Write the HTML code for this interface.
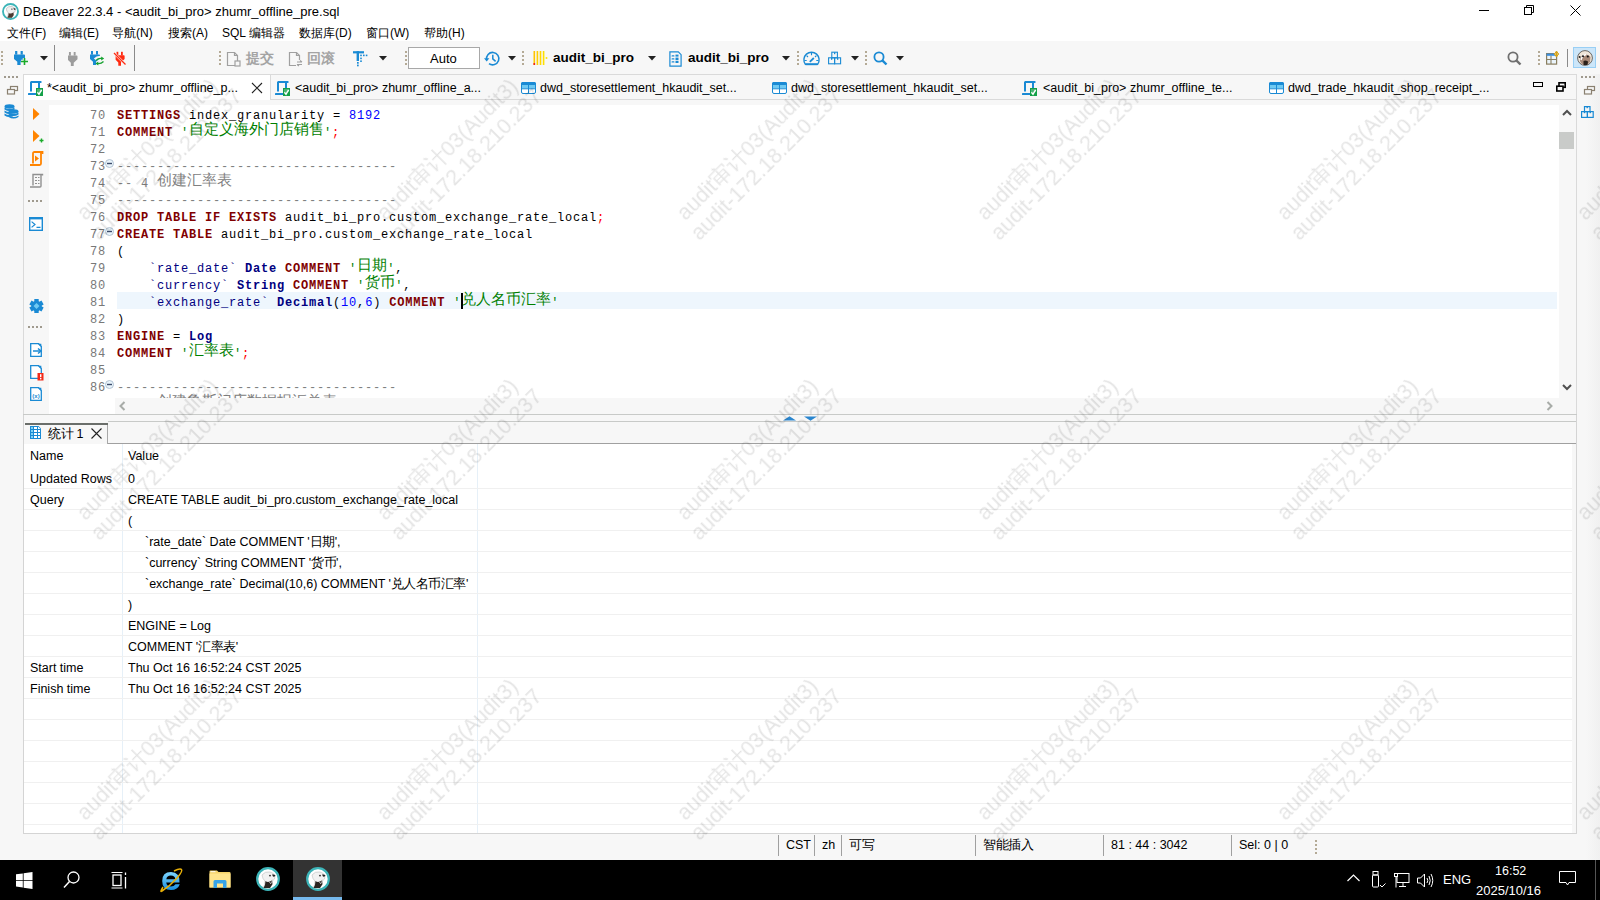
<!DOCTYPE html>
<html><head><meta charset="utf-8">
<style>
*{margin:0;padding:0;box-sizing:border-box}
html,body{width:1600px;height:900px;overflow:hidden;background:#f7f7f7;font-family:"Liberation Sans",sans-serif;font-size:12px;color:#000}
.a{position:absolute}
.t{position:absolute;white-space:pre;line-height:1}
svg{position:absolute;overflow:visible}
.code{position:absolute;font-family:"Liberation Mono",monospace;font-size:12px;letter-spacing:0.8px;white-space:pre;line-height:17px}
.ln{position:absolute;font-family:"Liberation Mono",monospace;font-size:12px;letter-spacing:0.8px;white-space:pre;line-height:17px;color:#787878;text-align:right;width:40px}
.k{color:#800000;font-weight:bold}
.ty{color:#000080;font-weight:bold}
.s{color:#008000}
.n{color:#0000ff}
.c{color:#808080}
.p{color:#ff0000}
.bq{color:#000080}
.cj{display:inline-block;width:15px;text-align:center;font-size:15px;line-height:17px;vertical-align:top;position:relative;top:-3px}
.rt{position:absolute;font-size:12.5px;white-space:pre;line-height:1}
.wm{position:absolute;width:240px;text-align:center;transform-origin:0 0;transform:rotate(-45deg);white-space:pre;color:rgba(0,0,0,0.105);will-change:transform;font-size:21.5px;line-height:24px;pointer-events:none}
.u{display:inline-block;width:1em;text-align:center}

</style></head><body>
<div class="a" style="left:0px;top:0px;width:1600px;height:41px;background:#fff"></div>
<svg style="left:2px;top:3px" width="17" height="17" viewBox="0 0 17 17"><g transform="scale(0.7083)"><circle cx="12" cy="12" r="10.6" fill="#fff" stroke="#3cb4b8" stroke-width="2.6"/><path d="M6 8Q9 4 14 5Q18 6 19 9L18.5 12Q17 14 16 13L16.5 17Q15 20 13 21L7.5 21Q9 17 9 14Q6.5 12 6 8Z" fill="#f0f0f0" stroke="#aaa" stroke-width=".8"/><path d="M9.5 14Q12 16 16 13.5L16.5 17L14 21H7.5Q9.5 18 9.5 14Z" fill="#4a3a30"/><path d="M16 7.5Q18.5 7 19.5 8.5Q19 10 17 9.5Z" fill="#222"/><circle cx="14" cy="8.6" r="1" fill="#222"/></g></svg>
<div class="t" style="left:23px;top:5px;font-size:13px">DBeaver 22.3.4 - &lt;audit_bi_pro&gt; zhumr_offline_pre.sql</div>
<div class="t" style="left:7px;top:27px;font-size:12px"><span class="u">文</span><span class="u">件</span>(F)</div>
<div class="t" style="left:59px;top:27px;font-size:12px"><span class="u">编</span><span class="u">辑</span>(E)</div>
<div class="t" style="left:112px;top:27px;font-size:12px"><span class="u">导</span><span class="u">航</span>(N)</div>
<div class="t" style="left:168px;top:27px;font-size:12px"><span class="u">搜</span><span class="u">索</span>(A)</div>
<div class="t" style="left:222px;top:27px;font-size:12px">SQL <span class="u">编</span><span class="u">辑</span><span class="u">器</span></div>
<div class="t" style="left:299px;top:27px;font-size:12px"><span class="u">数</span><span class="u">据</span><span class="u">库</span>(D)</div>
<div class="t" style="left:366px;top:27px;font-size:12px"><span class="u">窗</span><span class="u">口</span>(W)</div>
<div class="t" style="left:424px;top:27px;font-size:12px"><span class="u">帮</span><span class="u">助</span>(H)</div>
<div class="a" style="left:1479px;top:10px;width:10px;height:1px;background:#000"></div>
<svg style="left:1524px;top:5px" width="11" height="11" viewBox="0 0 11 11"><rect x="0.5" y="2.5" width="7" height="7" fill="none" stroke="#000"/><path d="M2.5 2.5V0.5H9.5V7.5H7.5" fill="none" stroke="#000"/></svg>
<svg style="left:1570px;top:5px" width="11" height="11" viewBox="0 0 11 11"><path d="M0.5 0.5L10.5 10.5M10.5 0.5L0.5 10.5" stroke="#000" stroke-width="1"/></svg>
<div class="a" style="left:0px;top:41px;width:1600px;height:33px;background:#f7f7f7"></div>
<div class="a" style="left:1px;top:51px;width:2px;height:2px;background:#b4aa96"></div><div class="a" style="left:1px;top:55px;width:2px;height:2px;background:#b4aa96"></div><div class="a" style="left:1px;top:59px;width:2px;height:2px;background:#b4aa96"></div><div class="a" style="left:1px;top:63px;width:2px;height:2px;background:#b4aa96"></div>
<svg style="left:14px;top:51px" width="16" height="15" viewBox="0 0 16 15"><g transform="scale(1.100,1)"><rect x="1" y="0" width="2" height="3.6" fill="#1a8ad4"/><rect x="6" y="0" width="2" height="3.6" fill="#1a8ad4"/><path d="M0 3.4H9.2Q10 3.4 10 4.2V7.2L6 10.8V14H3V10.8L0 8Z" fill="#1a8ad4"/></g><path d="M7 10.5H14M10.5 7V14" stroke="#f7f7f7" stroke-width="3.5"/><path d="M7 10.5H14M10.5 7V14" stroke="#1aab2a" stroke-width="1.6"/></svg>
<svg style="left:40px;top:56px" width="8" height="5" viewBox="0 0 8 5"><path d="M0 0H8L4 4.5Z" fill="#222"/></svg>
<div class="a" style="left:54px;top:45px;width:1px;height:26px;background:#8a8a8a"></div>
<svg style="left:68px;top:52px" width="10" height="13" viewBox="0 0 10 13"><g transform="scale(0.950,1)"><rect x="1" y="0" width="2" height="3.6" fill="#9c9c9c"/><rect x="6" y="0" width="2" height="3.6" fill="#9c9c9c"/><path d="M0 3.4H9.2Q10 3.4 10 4.2V7.2L6 10.8V14H3V10.8L0 8Z" fill="#9c9c9c"/></g></svg>
<svg style="left:90px;top:51px" width="16" height="15" viewBox="0 0 16 15"><g transform="scale(1.000,1)"><rect x="1" y="0" width="2" height="3.6" fill="#1a8ad4"/><rect x="6" y="0" width="2" height="3.6" fill="#1a8ad4"/><path d="M0 3.4H9.2Q10 3.4 10 4.2V7.2L6 10.8V14H3V10.8L0 8Z" fill="#1a8ad4"/></g><path d="M5 8.5Q7.5 5.5 12 6.3M14.5 10Q12 13.3 7.5 12.5" fill="none" stroke="#f7f7f7" stroke-width="3"/><path d="M6 9.5Q8.5 6.8 12 7.5M13.5 10.5Q11 13 7.5 12.5" fill="none" stroke="#18a332" stroke-width="1.4"/><path d="M11.2 5.5L14.2 7.5L11.2 9.5Z M8.3 10.5L5.3 12.5L8.3 14.5Z" fill="#18a332"/></svg>
<svg style="left:112px;top:51px" width="15" height="15" viewBox="0 0 15 15"><g transform="translate(3.6,0.8)"><g transform="scale(0.900,1)"><rect x="1" y="0" width="2" height="3.6" fill="#ff2a10"/><rect x="6" y="0" width="2" height="3.6" fill="#ff2a10"/><path d="M0 3.4H9.2Q10 3.4 10 4.2V7.2L6 10.8V14H3V10.8L0 8Z" fill="#ff2a10"/></g></g><path d="M2 2L13.5 13.5" stroke="#f7f7f7" stroke-width="2.4"/><path d="M2 2L13.5 13.5" stroke="#ff2a10" stroke-width="1.2"/></svg>
<div class="a" style="left:134px;top:45px;width:1px;height:26px;background:#8a8a8a"></div>
<div class="a" style="left:219px;top:51px;width:2px;height:2px;background:#b4aa96"></div><div class="a" style="left:219px;top:55px;width:2px;height:2px;background:#b4aa96"></div><div class="a" style="left:219px;top:59px;width:2px;height:2px;background:#b4aa96"></div><div class="a" style="left:219px;top:63px;width:2px;height:2px;background:#b4aa96"></div>
<svg style="left:226px;top:51px" width="15" height="16" viewBox="0 0 15 16"><path d="M1.5 1.5H8.5L11.5 4.5V14.5H1.5Z" fill="none" stroke="#a0a0a0" stroke-width="1.2"/><path d="M8.5 1.5V4.5H11.5" fill="none" stroke="#a0a0a0" stroke-width="1.2"/><rect x="9" y="10" width="5" height="5" fill="#f7f7f7" stroke="#a0a0a0" stroke-width="1.2"/></svg>
<div class="t" style="left:246px;top:51px;font-size:14px;font-weight:bold;color:#a4a4a4"><span class="u">提</span><span class="u">交</span></div>
<svg style="left:288px;top:51px" width="15" height="16" viewBox="0 0 15 16"><path d="M1.5 1.5H8.5L11.5 4.5V14.5H1.5Z" fill="none" stroke="#a0a0a0" stroke-width="1.2"/><path d="M8.5 1.5V4.5H11.5" fill="none" stroke="#a0a0a0" stroke-width="1.2"/><rect x="8" y="9" width="7" height="7" fill="#f7f7f7"/><path d="M9 11H14M12 9.5L14 11M9 13.5H14M11 15L9 13.5" stroke="#a0a0a0" stroke-width="1.1" fill="none"/></svg>
<div class="t" style="left:307px;top:51px;font-size:14px;font-weight:bold;color:#a4a4a4"><span class="u">回</span><span class="u">滚</span></div>
<svg style="left:353px;top:51px" width="16" height="16" viewBox="0 0 16 16"><rect x="0" y="0.2" width="11" height="2.2" fill="#1a8ad4"/><rect x="3.6" y="0.2" width="2.4" height="9.8" fill="#1a8ad4"/><rect x="4" y="11" width="1.7" height="1.7" fill="#1a8ad4"/><rect x="4" y="13.6" width="1.7" height="1.7" fill="#1a8ad4"/><rect x="7.2" y="3.6" width="1.6" height="1.6" fill="#1a8ad4"/><rect x="10" y="3.6" width="1.6" height="1.6" fill="#1a8ad4"/><rect x="12.8" y="3.6" width="1.6" height="1.6" fill="#1a8ad4"/><rect x="7.2" y="6.6" width="1.6" height="1.6" fill="#1a8ad4"/><rect x="7.2" y="9.4" width="1.6" height="1.6" fill="#1a8ad4"/></svg>
<svg style="left:379px;top:56px" width="8" height="5" viewBox="0 0 8 5"><path d="M0 0H8L4 4.5Z" fill="#222"/></svg>
<div class="a" style="left:405px;top:51px;width:2px;height:2px;background:#b4aa96"></div><div class="a" style="left:405px;top:55px;width:2px;height:2px;background:#b4aa96"></div><div class="a" style="left:405px;top:59px;width:2px;height:2px;background:#b4aa96"></div><div class="a" style="left:405px;top:63px;width:2px;height:2px;background:#b4aa96"></div>
<div class="a" style="left:408px;top:47px;width:72px;height:22px;background:#fff;border:1px solid #a8a8a8"></div>
<div class="t" style="left:430px;top:52px;font-size:13px">Auto</div>
<svg style="left:484px;top:51px" width="17" height="15" viewBox="0 0 17 15"><path d="M2.6 8.8A6.2 6.2 0 1 1 5 12.6" fill="none" stroke="#1a8ad4" stroke-width="1.6"/><path d="M0 7.2H5.4L2.7 10.6Z" fill="#1a8ad4"/><path d="M8.8 3.8V7.8L11.6 10.4" fill="none" stroke="#1a8ad4" stroke-width="1.5"/></svg>
<svg style="left:508px;top:56px" width="8" height="5" viewBox="0 0 8 5"><path d="M0 0H8L4 4.5Z" fill="#222"/></svg>
<div class="a" style="left:522px;top:51px;width:2px;height:2px;background:#b4aa96"></div><div class="a" style="left:522px;top:55px;width:2px;height:2px;background:#b4aa96"></div><div class="a" style="left:522px;top:59px;width:2px;height:2px;background:#b4aa96"></div><div class="a" style="left:522px;top:63px;width:2px;height:2px;background:#b4aa96"></div>
<svg style="left:533px;top:51px" width="15" height="15" viewBox="0 0 15 15"><rect x="0.5" y="0" width="1.6" height="14" fill="#ffc400"/><rect x="3.6" y="0" width="1.6" height="14" fill="#ffcf00"/><rect x="6.7" y="0" width="1.6" height="14" fill="#ffd800"/><rect x="9.8" y="0" width="1.6" height="14" fill="#ffe000"/><rect x="0.5" y="12" width="1.6" height="2" fill="#f02020"/><circle cx="13.5" cy="7" r="1" fill="#ffe600"/></svg>
<div class="t" style="left:553px;top:51px;font-size:13.5px;font-weight:bold">audit_bi_pro</div>
<svg style="left:648px;top:56px" width="8" height="5" viewBox="0 0 8 5"><path d="M0 0H8L4 4.5Z" fill="#222"/></svg>
<svg style="left:669px;top:51px" width="13" height="16" viewBox="0 0 13 16"><path d="M0.9 0.9H9.3L12.1 3.7V15.1H0.9Z" fill="none" stroke="#1a8ad4" stroke-width="1.2"/><rect x="2.5" y="4.2" width="3" height="1.4" rx=".7" fill="#1a8ad4"/><rect x="2.5" y="7.2" width="3" height="1.4" rx=".7" fill="#1a8ad4"/><rect x="2.5" y="10.2" width="3" height="1.4" rx=".7" fill="#1a8ad4"/><rect x="6.5" y="3.6" width="3" height="2" fill="#1a8ad4"/><rect x="6.5" y="6.6" width="3" height="2.6" fill="#1a8ad4"/><rect x="6.5" y="10" width="3" height="2" fill="#1a8ad4"/></svg>
<div class="t" style="left:688px;top:51px;font-size:13.5px;font-weight:bold">audit_bi_pro</div>
<svg style="left:782px;top:56px" width="8" height="5" viewBox="0 0 8 5"><path d="M0 0H8L4 4.5Z" fill="#222"/></svg>
<div class="a" style="left:797px;top:51px;width:2px;height:2px;background:#b4aa96"></div><div class="a" style="left:797px;top:55px;width:2px;height:2px;background:#b4aa96"></div><div class="a" style="left:797px;top:59px;width:2px;height:2px;background:#b4aa96"></div><div class="a" style="left:797px;top:63px;width:2px;height:2px;background:#b4aa96"></div>
<svg style="left:803px;top:51px" width="17" height="14" viewBox="0 0 17 14"><path d="M2.3 13.2A7.6 7.6 0 1 1 14.7 13.2Z" fill="none" stroke="#1a8ad4" stroke-width="1.4"/><path d="M8.5 2V4.2M3.6 4.6L5 6M13.4 4.6L12 6M1.5 9.5H3.7M15.5 9.5H13.3" stroke="#1a8ad4" stroke-width="1.1"/><path d="M6.8 10.8L10.8 7" stroke="#1a8ad4" stroke-width="1.8"/><rect x="2.5" y="12.4" width="12" height="1.8" fill="#1a8ad4"/></svg>
<svg style="left:828px;top:51px" width="14" height="14" viewBox="0 0 14 14"><g fill="none" stroke="#1a8ad4" stroke-width="1.1"><rect x="3.8" y="1.2" width="5.6" height="5.6"/><rect x="0.6" y="6.8" width="6" height="6"/><rect x="6.6" y="6.8" width="6" height="6"/></g><g fill="#1a8ad4"><rect x="6" y="1.2" width="1.3" height="2"/><rect x="3" y="6.8" width="1.3" height="2"/><rect x="9" y="6.8" width="1.3" height="2"/></g></svg>
<svg style="left:851px;top:56px" width="8" height="5" viewBox="0 0 8 5"><path d="M0 0H8L4 4.5Z" fill="#222"/></svg>
<div class="a" style="left:865px;top:51px;width:2px;height:2px;background:#b4aa96"></div><div class="a" style="left:865px;top:55px;width:2px;height:2px;background:#b4aa96"></div><div class="a" style="left:865px;top:59px;width:2px;height:2px;background:#b4aa96"></div><div class="a" style="left:865px;top:63px;width:2px;height:2px;background:#b4aa96"></div>
<svg style="left:873px;top:51px" width="15" height="15" viewBox="0 0 15 15"><circle cx="6" cy="6" r="4.6" fill="none" stroke="#1a8ad4" stroke-width="1.8"/><path d="M9.3 9.3L13.5 13.5" stroke="#1a8ad4" stroke-width="2.4"/></svg>
<svg style="left:896px;top:56px" width="8" height="5" viewBox="0 0 8 5"><path d="M0 0H8L4 4.5Z" fill="#222"/></svg>
<svg style="left:1507px;top:51px" width="15" height="15" viewBox="0 0 15 15"><circle cx="6" cy="6" r="4.6" fill="none" stroke="#707070" stroke-width="1.8"/><path d="M9.3 9.3L13.5 13.5" stroke="#707070" stroke-width="2.4"/></svg>
<div class="a" style="left:1538px;top:51px;width:2px;height:2px;background:#b4aa96"></div><div class="a" style="left:1538px;top:55px;width:2px;height:2px;background:#b4aa96"></div><div class="a" style="left:1538px;top:59px;width:2px;height:2px;background:#b4aa96"></div><div class="a" style="left:1538px;top:63px;width:2px;height:2px;background:#b4aa96"></div>
<svg style="left:1546px;top:51px" width="15" height="14" viewBox="0 0 15 14"><rect x="0.6" y="2.6" width="10" height="10.5" fill="#eaf4fb" stroke="#8a7f60" stroke-width="1.2"/><rect x="0.6" y="2.6" width="10" height="2.2" fill="#3a8ede"/><path d="M0.6 8.5H10.6M5 4.8V13" stroke="#8a7f60" stroke-width="1.1"/><path d="M10.5 0L12.5 3L10.5 6L8.5 3Z M8 3H13M10.5 0.5V5.5" fill="#fff6cc" stroke="#d4a21a" stroke-width="1"/></svg>
<div class="a" style="left:1567px;top:49px;width:1px;height:18px;background:#8a8a8a"></div>
<div class="a" style="left:1573px;top:47px;width:23px;height:21px;background:#cce6f9;border:1px solid #99cff5"></div>
<svg style="left:1577px;top:50px" width="16" height="16" viewBox="0 0 16 16"><circle cx="8" cy="8" r="7.4" fill="#efe6da" stroke="#3a302a" stroke-width=".7"/><path d="M3 9Q4 5 8 4.5Q12 4.5 13.5 7L13 12Q11 15 8 15Q4 14.5 3 11Z" fill="#a88a78"/><path d="M4 10Q5 5.5 9 4.5" fill="none" stroke="#fff" stroke-width="1.3"/><circle cx="6" cy="6.3" r="1" fill="#111"/><circle cx="10.8" cy="6.5" r="1.1" fill="#111"/><path d="M6.5 11Q8.5 10 11 11.5L10.5 15H6.5Z" fill="#2b2018"/><circle cx="2.6" cy="7" r="1" fill="#222"/></svg>
<div class="a" style="left:23px;top:74px;width:1554px;height:26px;background:#f7f7f7;border-top:1px solid #dadada;border-left:1px solid #dadada;border-right:1px solid #dadada;border-bottom:1px solid #dadada"></div>
<div class="a" style="left:23px;top:74px;width:248px;height:26px;background:#fff;border-top:1px solid #dadada;border-left:1px solid #dadada;border-right:1px solid #dadada"></div>
<svg style="left:28px;top:81px" width="16" height="16" viewBox="0 0 16 16"><rect x="2" y="1" width="2" height="9.5" fill="#1a8ad4"/><rect x="2.5" y="0" width="11" height="2" rx=".6" fill="#1a8ad4"/><rect x="10" y="1" width="2" height="7" fill="#1a8ad4"/><rect x="0" y="12" width="8.5" height="2" rx=".6" fill="#1a8ad4"/><rect x="8" y="7" width="7" height="8" fill="#14a048"/><rect x="9" y="8" width="5" height="3" fill="#6cc090" opacity=".6"/><path d="M9.4 11.2L11 13.2L13.6 8.8" fill="none" stroke="#fff" stroke-width="1.4"/></svg>
<div class="t" style="left:47px;top:82px;font-size:12.5px">*&lt;audit_bi_pro&gt; zhumr_offline_p...</div>
<svg style="left:275px;top:81px" width="16" height="16" viewBox="0 0 16 16"><rect x="2" y="1" width="2" height="9.5" fill="#1a8ad4"/><rect x="2.5" y="0" width="11" height="2" rx=".6" fill="#1a8ad4"/><rect x="10" y="1" width="2" height="7" fill="#1a8ad4"/><rect x="0" y="12" width="8.5" height="2" rx=".6" fill="#1a8ad4"/><rect x="8" y="7" width="7" height="8" fill="#14a048"/><rect x="9" y="8" width="5" height="3" fill="#6cc090" opacity=".6"/><path d="M9.4 11.2L11 13.2L13.6 8.8" fill="none" stroke="#fff" stroke-width="1.4"/></svg>
<div class="t" style="left:295px;top:82px;font-size:12.5px">&lt;audit_bi_pro&gt; zhumr_offline_a...</div>
<svg style="left:521px;top:82px" width="15" height="12" viewBox="0 0 15 12"><rect x="0.5" y="0.5" width="14" height="11" rx="1.5" fill="#fff" stroke="#1a8ad4" stroke-width="1"/><rect x="0" y="0" width="15" height="3" rx="1.5" fill="#1a8ad4"/><rect x="1" y="3" width="13" height="3.5" fill="#6ec9f2"/><path d="M7.5 3V12M0.5 6.8H14.5" stroke="#1a8ad4" stroke-width="1"/></svg>
<div class="t" style="left:540px;top:82px;font-size:12.5px">dwd_storesettlement_hkaudit_set...</div>
<svg style="left:772px;top:82px" width="15" height="12" viewBox="0 0 15 12"><rect x="0.5" y="0.5" width="14" height="11" rx="1.5" fill="#fff" stroke="#1a8ad4" stroke-width="1"/><rect x="0" y="0" width="15" height="3" rx="1.5" fill="#1a8ad4"/><rect x="1" y="3" width="13" height="3.5" fill="#6ec9f2"/><path d="M7.5 3V12M0.5 6.8H14.5" stroke="#1a8ad4" stroke-width="1"/></svg>
<div class="t" style="left:791px;top:82px;font-size:12.5px">dwd_storesettlement_hkaudit_set...</div>
<svg style="left:1022px;top:81px" width="16" height="16" viewBox="0 0 16 16"><rect x="2" y="1" width="2" height="9.5" fill="#1a8ad4"/><rect x="2.5" y="0" width="11" height="2" rx=".6" fill="#1a8ad4"/><rect x="10" y="1" width="2" height="7" fill="#1a8ad4"/><rect x="0" y="12" width="8.5" height="2" rx=".6" fill="#1a8ad4"/><rect x="8" y="7" width="7" height="8" fill="#14a048"/><rect x="9" y="8" width="5" height="3" fill="#6cc090" opacity=".6"/><path d="M9.4 11.2L11 13.2L13.6 8.8" fill="none" stroke="#fff" stroke-width="1.4"/></svg>
<div class="t" style="left:1043px;top:82px;font-size:12.5px">&lt;audit_bi_pro&gt; zhumr_offline_te...</div>
<svg style="left:1269px;top:82px" width="15" height="12" viewBox="0 0 15 12"><rect x="0.5" y="0.5" width="14" height="11" rx="1.5" fill="#fff" stroke="#1a8ad4" stroke-width="1"/><rect x="0" y="0" width="15" height="3" rx="1.5" fill="#1a8ad4"/><rect x="1" y="3" width="13" height="3.5" fill="#6ec9f2"/><path d="M7.5 3V12M0.5 6.8H14.5" stroke="#1a8ad4" stroke-width="1"/></svg>
<div class="t" style="left:1288px;top:82px;font-size:12.5px">dwd_trade_hkaudit_shop_receipt_...</div>
<svg style="left:251px;top:82px" width="12" height="12" viewBox="0 0 12 12"><path d="M1 1L11 11M11 1L1 11" stroke="#222" stroke-width="1.1"/></svg>
<div class="a" style="left:1533px;top:82px;width:10px;height:5px;border:1.6px solid #000"></div>
<svg style="left:1556px;top:82px" width="10" height="10" viewBox="0 0 10 10"><rect x="3" y="0.8" width="6.2" height="4.5" fill="none" stroke="#000" stroke-width="1.6"/><rect x="0.8" y="4.2" width="6.2" height="4.8" fill="#f7f7f7" stroke="#000" stroke-width="1.6"/></svg>
<div class="a" style="left:23px;top:100px;width:1554px;height:315px;background:#f7f7f7;border-left:1px solid #dadada;border-right:1px solid #dadada"></div>
<div class="a" style="left:49px;top:105px;width:1510px;height:293px;background:#fff"></div>
<div class="a" style="left:49px;top:398px;width:66px;height:16px;background:#fff"></div>
<svg style="left:33px;top:108px" width="7" height="12" viewBox="0 0 7 12"><path d="M0 0L6.5 6L0 12Z" fill="#ff8400"/></svg>
<svg style="left:33px;top:130px" width="11" height="14" viewBox="0 0 11 14"><path d="M0 0L6.5 6L0 12Z" fill="#ff8400"/><path d="M6.5 10.5H10.5M8.5 8.5V12.5" stroke="#1aab2a" stroke-width="1.4"/></svg>
<svg style="left:29px;top:151px" width="15" height="15" viewBox="0 0 15 15"><path d="M4 12.5V2.5Q4 1 5.5 1H13.5V3" fill="none" stroke="#ff8400" stroke-width="1.8"/><path d="M12 2V12.5Q12 14 10.5 14H1" fill="none" stroke="#ff8400" stroke-width="1.8"/><path d="M6 4.5L10 7.5L6 10.5Z" fill="#ff8400"/></svg>
<svg style="left:29px;top:173px" width="15" height="15" viewBox="0 0 15 15"><path d="M4 12.5V1.5H13.5V2.5" fill="none" stroke="#909090" stroke-width="1.4"/><path d="M12 1.5V13Q12 14 11 14H1" fill="none" stroke="#909090" stroke-width="1.4"/><path d="M6 4.5H10.5M6 7.5H10.5M6 10.5H10.5" stroke="#909090" stroke-width="1" stroke-dasharray="2 1"/></svg>
<div class="a" style="left:28px;top:200px;width:2px;height:2px;background:#a09a8e"></div><div class="a" style="left:32px;top:200px;width:2px;height:2px;background:#a09a8e"></div><div class="a" style="left:36px;top:200px;width:2px;height:2px;background:#a09a8e"></div><div class="a" style="left:40px;top:200px;width:2px;height:2px;background:#a09a8e"></div>
<svg style="left:29px;top:217px" width="14" height="14" viewBox="0 0 14 14"><rect x="0.7" y="0.7" width="12.6" height="12.6" fill="#fff" stroke="#1a8ad4" stroke-width="1.4"/><rect x="0" y="0" width="14" height="2.4" fill="#1a8ad4"/><path d="M2.6 4.6L6 7.5L2.6 10.4M7.5 10.3H11.5" fill="none" stroke="#1a8ad4" stroke-width="1.2"/></svg>
<svg style="left:28.5px;top:299px" width="15" height="14" viewBox="0 0 15 14"><g transform="translate(7.5,7)"><rect x="-2.2" y="-7" width="4.4" height="4" fill="#1a8ad4" transform="rotate(0)"/><rect x="-2.2" y="-7" width="4.4" height="4" fill="#1a8ad4" transform="rotate(60)"/><rect x="-2.2" y="-7" width="4.4" height="4" fill="#1a8ad4" transform="rotate(120)"/><rect x="-2.2" y="-7" width="4.4" height="4" fill="#1a8ad4" transform="rotate(180)"/><rect x="-2.2" y="-7" width="4.4" height="4" fill="#1a8ad4" transform="rotate(240)"/><rect x="-2.2" y="-7" width="4.4" height="4" fill="#1a8ad4" transform="rotate(300)"/><circle r="5.2" fill="#1a8ad4"/><path d="M0 -3L3 0L0 3L-3 0Z" fill="#6fcaf3"/></g></svg>
<div class="a" style="left:28px;top:326px;width:2px;height:2px;background:#a09a8e"></div><div class="a" style="left:32px;top:326px;width:2px;height:2px;background:#a09a8e"></div><div class="a" style="left:36px;top:326px;width:2px;height:2px;background:#a09a8e"></div><div class="a" style="left:40px;top:326px;width:2px;height:2px;background:#a09a8e"></div>
<svg style="left:30px;top:343px" width="13" height="15" viewBox="0 0 13 15"><path d="M0.7 0.7H8.5L11.3 3.5V13.3H0.7Z" fill="#fff" stroke="#1a8ad4" stroke-width="1.3"/><path d="M8 0.7L11.3 4V0.7Z" fill="#1a8ad4"/><path d="M3 8H10" stroke="#1a8ad4" stroke-width="1.5"/><path d="M8 5.5L11 8L8 10.5" fill="none" stroke="#1a8ad4" stroke-width="1.5"/></svg>
<svg style="left:30px;top:365px" width="14" height="16" viewBox="0 0 14 16"><path d="M0.7 0.7H8.5L11.3 3.5V13.3H0.7Z" fill="#fff" stroke="#1a8ad4" stroke-width="1.3"/><path d="M8 0.7L11.3 4V0.7Z" fill="#1a8ad4"/><rect x="7.5" y="8" width="6" height="7.5" fill="#f22a1a"/><rect x="10" y="9.2" width="1.4" height="3" fill="#fff"/><rect x="10" y="13" width="1.4" height="1.4" fill="#fff"/></svg>
<svg style="left:30px;top:387px" width="13" height="15" viewBox="0 0 13 15"><path d="M0.7 0.7H8.5L11.3 3.5V13.3H0.7Z" fill="#fff" stroke="#1a8ad4" stroke-width="1.3"/><path d="M8 0.7L11.3 4V0.7Z" fill="#1a8ad4"/><text x="6" y="11" font-size="6" font-family="Liberation Sans" font-weight="bold" fill="#1a8ad4" text-anchor="middle">(x)</text></svg>
<div class="a" style="left:49px;top:105px;width:1510px;height:293px;overflow:hidden">
<div class="a" style="left:68px;top:187px;width:1440px;height:17px;background:#eef6fd"></div>
<div class="ln" style="left:17px;top:3px">70
71
72
73
74
75
76
77
78
79
80
81
82
83
84
85
86
87</div>
<div class="code" style="left:68px;top:3px"><span class="k">SETTINGS</span> index_granularity = <span class="n">8192</span>
<span class="k">COMMENT</span> <span class="s">'<span class="cj">自</span><span class="cj">定</span><span class="cj">义</span><span class="cj">海</span><span class="cj">外</span><span class="cj">门</span><span class="cj">店</span><span class="cj">销</span><span class="cj">售</span>'</span><span class="p">;</span>

<span class="c">-----------------------------------</span>
<span class="c">-- 4 <span class="cj">创</span><span class="cj">建</span><span class="cj">汇</span><span class="cj">率</span><span class="cj">表</span></span>
<span class="c">-----------------------------------</span>
<span class="k">DROP TABLE IF EXISTS</span> audit_bi_pro.custom_exchange_rate_local<span class="p">;</span>
<span class="k">CREATE TABLE</span> audit_bi_pro.custom_exchange_rate_local
(
    <span class="bq">`rate_date`</span> <span class="ty">Date</span> <span class="k">COMMENT</span> <span class="s">'<span class="cj">日</span><span class="cj">期</span>'</span>,
    <span class="bq">`currency`</span> <span class="ty">String</span> <span class="k">COMMENT</span> <span class="s">'<span class="cj">货</span><span class="cj">币</span>'</span>,
    <span class="bq">`exchange_rate`</span> <span class="ty">Decimal</span>(<span class="n">10</span>,<span class="n">6</span>) <span class="k">COMMENT</span> <span class="s">'<span class="cj">兑</span><span class="cj">人</span><span class="cj">名</span><span class="cj">币</span><span class="cj">汇</span><span class="cj">率</span>'</span>
)
<span class="k">ENGINE</span> = <span class="ty">Log</span>
<span class="k">COMMENT</span> <span class="s">'<span class="cj">汇</span><span class="cj">率</span><span class="cj">表</span>'</span><span class="p">;</span>

<span class="c">-----------------------------------</span>
<span class="c">-- 5 <span class="cj">创</span><span class="cj">建</span><span class="cj">鲁</span><span class="cj">斯</span><span class="cj">门</span><span class="cj">店</span><span class="cj">数</span><span class="cj">据</span><span class="cj">报</span><span class="cj">汇</span><span class="cj">总</span><span class="cj">表</span></span></div>
<svg style="left:56px;top:54px" width="10" height="10" viewBox="0 0 10 10"><circle cx="4.5" cy="4.5" r="4" fill="#e9f4fb" stroke="#b4c4d4" stroke-width="1"/><path d="M2 4.5H7" stroke="#3a4a6a" stroke-width="1.4"/></svg>
<svg style="left:56px;top:122px" width="10" height="10" viewBox="0 0 10 10"><circle cx="4.5" cy="4.5" r="4" fill="#e9f4fb" stroke="#b4c4d4" stroke-width="1"/><path d="M2 4.5H7" stroke="#3a4a6a" stroke-width="1.4"/></svg>
<svg style="left:56px;top:275px" width="10" height="10" viewBox="0 0 10 10"><circle cx="4.5" cy="4.5" r="4" fill="#e9f4fb" stroke="#b4c4d4" stroke-width="1"/><path d="M2 4.5H7" stroke="#3a4a6a" stroke-width="1.4"/></svg>
<div class="a" style="left:412px;top:188px;width:2px;height:16px;background:#000"></div>
</div>
<div class="a" style="left:1559px;top:105px;width:17px;height:293px;background:#f7f7f7"></div>
<svg style="left:1562px;top:109px" width="10" height="7" viewBox="0 0 10 7"><path d="M1 6L5 2L9 6" fill="none" stroke="#505050" stroke-width="2"/></svg>
<div class="a" style="left:1559px;top:132px;width:15px;height:17px;background:#c9cbc9"></div>
<svg style="left:1562px;top:384px" width="10" height="7" viewBox="0 0 10 7"><path d="M1 1L5 5L9 1" fill="none" stroke="#505050" stroke-width="2"/></svg>
<div class="a" style="left:115px;top:398px;width:1444px;height:16px;background:#f7f7f7"></div>
<svg style="left:119px;top:401px" width="7" height="10" viewBox="0 0 7 10"><path d="M5.5 1L1.5 5L5.5 9" fill="none" stroke="#a8aca8" stroke-width="2"/></svg>
<svg style="left:1546px;top:401px" width="7" height="10" viewBox="0 0 7 10"><path d="M1.5 1L5.5 5L1.5 9" fill="none" stroke="#a8aca8" stroke-width="2"/></svg>
<div class="a" style="left:23px;top:414px;width:1554px;height:1px;background:#c8cac8"></div>
<div class="a" style="left:23px;top:415px;width:1554px;height:29px;background:#f7f7f7;border-left:1px solid #d4d4d4;border-right:1px solid #d4d4d4"></div>
<div class="a" style="left:108px;top:421px;width:1468px;height:1px;background:#c8cac8"></div>
<svg style="left:783px;top:416px" width="13" height="5" viewBox="0 0 13 5"><path d="M0 4.5L6.5 0.3L13 4.5Z" fill="#2a86cf"/></svg>
<svg style="left:804px;top:416px" width="13" height="5" viewBox="0 0 13 5"><path d="M0 0.5H13L6.5 4.7Z" fill="#2a86cf"/></svg>
<div class="a" style="left:24px;top:443px;width:1552px;height:1px;background:#a0a0a0"></div>
<div class="a" style="left:24px;top:423px;width:84px;height:21px;background:#f7f7f7;border-right:1px solid #a8a8a8"></div>
<div class="a" style="left:25px;top:423px;width:83px;height:2px;background:#6a6e6a"></div>
<svg style="left:30px;top:426px" width="11" height="13" viewBox="0 0 11 13"><path d="M0 0H8.5L11 2.5V13H0Z" fill="#1a8ad4"/><rect x="1" y="1" width="2" height="2" fill="#7fd4f6"/><rect x="4" y="1" width="3" height="2" fill="#fff"/><rect x="1" y="4" width="2" height="2" fill="#7fd4f6"/><rect x="4" y="4" width="3" height="2" fill="#fff"/><rect x="8" y="4" width="2" height="2" fill="#fff"/><rect x="1" y="7" width="2" height="2" fill="#7fd4f6"/><rect x="4" y="7" width="3" height="2" fill="#fff"/><rect x="8" y="7" width="2" height="2" fill="#fff"/><rect x="1" y="10" width="2" height="2" fill="#7fd4f6"/><rect x="4" y="10" width="3" height="2" fill="#fff"/><rect x="8" y="10" width="2" height="2" fill="#fff"/><path d="M8 1H8.6L10 2.4V3H8Z" fill="#fff"/></svg>
<div class="t" style="left:48px;top:428px;font-size:12.5px"><span class="u">统</span><span class="u">计</span> 1</div>
<svg style="left:91px;top:428px" width="11" height="11" viewBox="0 0 11 11"><path d="M0.5 0.5L10.5 10.5M10.5 0.5L0.5 10.5" stroke="#222" stroke-width="1.1"/></svg>
<div class="a" style="left:23px;top:444px;width:1554px;height:390px;background:#fff;border-left:1px solid #d4d4d4;border-right:1px solid #d4d4d4;border-bottom:1px solid #d4d4d4"></div>
<div class="a" style="left:122px;top:444px;width:1px;height:389px;background:#e6f0f8"></div>
<div class="a" style="left:477px;top:444px;width:1px;height:389px;background:#e6f0f8"></div>
<div class="a" style="left:24px;top:488px;width:1552px;height:1px;background:#f0f0f0"></div>
<div class="a" style="left:24px;top:509px;width:1552px;height:1px;background:#f0f0f0"></div>
<div class="a" style="left:24px;top:530px;width:1552px;height:1px;background:#f0f0f0"></div>
<div class="a" style="left:24px;top:551px;width:1552px;height:1px;background:#f0f0f0"></div>
<div class="a" style="left:24px;top:572px;width:1552px;height:1px;background:#f0f0f0"></div>
<div class="a" style="left:24px;top:593px;width:1552px;height:1px;background:#f0f0f0"></div>
<div class="a" style="left:24px;top:614px;width:1552px;height:1px;background:#f0f0f0"></div>
<div class="a" style="left:24px;top:635px;width:1552px;height:1px;background:#f0f0f0"></div>
<div class="a" style="left:24px;top:656px;width:1552px;height:1px;background:#f0f0f0"></div>
<div class="a" style="left:24px;top:677px;width:1552px;height:1px;background:#f0f0f0"></div>
<div class="a" style="left:24px;top:698px;width:1552px;height:1px;background:#f0f0f0"></div>
<div class="a" style="left:24px;top:719px;width:1552px;height:1px;background:#f0f0f0"></div>
<div class="a" style="left:24px;top:740px;width:1552px;height:1px;background:#f0f0f0"></div>
<div class="a" style="left:24px;top:761px;width:1552px;height:1px;background:#f0f0f0"></div>
<div class="a" style="left:24px;top:782px;width:1552px;height:1px;background:#f0f0f0"></div>
<div class="a" style="left:24px;top:803px;width:1552px;height:1px;background:#f0f0f0"></div>
<div class="a" style="left:24px;top:824px;width:1552px;height:1px;background:#f0f0f0"></div>
<div class="a" style="left:1572px;top:444px;width:4px;height:389px;background:#f7f7f7"></div>
<div class="rt" style="left:30px;top:450px">Name</div>
<div class="rt" style="left:128px;top:450px">Value</div>
<div class="rt" style="left:30px;top:473px">Updated Rows</div>
<div class="rt" style="left:128px;top:473px">0</div>
<div class="rt" style="left:30px;top:494px">Query</div>
<div class="rt" style="left:128px;top:494px">CREATE TABLE audit_bi_pro.custom_exchange_rate_local</div>
<div class="rt" style="left:128px;top:515px">(</div>
<div class="rt" style="left:145px;top:536px">`rate_date` Date COMMENT '<span class="u">日</span><span class="u">期</span>',</div>
<div class="rt" style="left:145px;top:557px">`currency` String COMMENT '<span class="u">货</span><span class="u">币</span>',</div>
<div class="rt" style="left:145px;top:578px">`exchange_rate` Decimal(10,6) COMMENT '<span class="u">兑</span><span class="u">人</span><span class="u">名</span><span class="u">币</span><span class="u">汇</span><span class="u">率</span>'</div>
<div class="rt" style="left:128px;top:599px">)</div>
<div class="rt" style="left:128px;top:620px">ENGINE = Log</div>
<div class="rt" style="left:128px;top:641px">COMMENT '<span class="u">汇</span><span class="u">率</span><span class="u">表</span>'</div>
<div class="rt" style="left:30px;top:662px">Start time</div>
<div class="rt" style="left:128px;top:662px">Thu Oct 16 16:52:24 CST 2025</div>
<div class="rt" style="left:30px;top:683px">Finish time</div>
<div class="rt" style="left:128px;top:683px">Thu Oct 16 16:52:24 CST 2025</div>
<div class="a" style="left:4px;top:76px;width:2px;height:2px;background:#a09a8e"></div><div class="a" style="left:8px;top:76px;width:2px;height:2px;background:#a09a8e"></div><div class="a" style="left:12px;top:76px;width:2px;height:2px;background:#a09a8e"></div><div class="a" style="left:16px;top:76px;width:2px;height:2px;background:#a09a8e"></div>
<svg style="left:7px;top:86px" width="11" height="9" viewBox="0 0 11 9"><rect x="3.5" y="0.5" width="7" height="4" fill="none" stroke="#8a8070" stroke-width="1.2"/><rect x="0.5" y="3.5" width="7" height="4.5" fill="#f7f7f7" stroke="#8a8070" stroke-width="1.2"/></svg>
<svg style="left:4px;top:104px" width="15" height="15" viewBox="0 0 15 15"><g fill="#1a8ad4"><ellipse cx="5.5" cy="2.5" rx="5" ry="2.2"/><path d="M0.5 3.5V5.5Q5.5 8.5 10.5 5.5V3.5Q5.5 6.5 0.5 3.5Z"/><path d="M0.5 6.5V8.5Q5.5 11.5 10.5 8.5V6.5Q5.5 9.5 0.5 6.5Z"/><path d="M0.5 9.5V11.5Q5.5 14.5 10.5 11.5V9.5Q5.5 12.5 0.5 9.5Z"/><ellipse cx="9.5" cy="7.5" rx="5" ry="2.2"/><path d="M4.5 8.5V10.5Q9.5 13.5 14.5 10.5V8.5Q9.5 11.5 4.5 8.5Z"/><path d="M4.5 11.5V13Q9.5 16 14.5 13V11.5Q9.5 14.5 4.5 11.5Z"/></g><ellipse cx="9.5" cy="7.5" rx="4" ry="1.4" fill="#fff" opacity=".0"/></svg>
<div class="a" style="left:1586px;top:74px;width:14px;height:786px;background:linear-gradient(90deg,#f7f7f7,#f0f0f0)"></div>
<div class="a" style="left:1581px;top:76px;width:2px;height:2px;background:#a09a8e"></div><div class="a" style="left:1585px;top:76px;width:2px;height:2px;background:#a09a8e"></div><div class="a" style="left:1589px;top:76px;width:2px;height:2px;background:#a09a8e"></div><div class="a" style="left:1593px;top:76px;width:2px;height:2px;background:#a09a8e"></div>
<svg style="left:1584px;top:86px" width="11" height="9" viewBox="0 0 11 9"><rect x="3.5" y="0.5" width="7" height="4" fill="none" stroke="#8a8070" stroke-width="1.2"/><rect x="0.5" y="3.5" width="7" height="4.5" fill="#f7f7f7" stroke="#8a8070" stroke-width="1.2"/></svg>
<svg style="left:1581px;top:106px" width="13" height="12" viewBox="0 0 13 12"><rect x="3.5" y="0.6" width="5.5" height="5" fill="none" stroke="#1a8ad4" stroke-width="1.2"/><rect x="0.6" y="5.6" width="5.8" height="5.8" fill="none" stroke="#1a8ad4" stroke-width="1.2"/><rect x="6.4" y="5.6" width="5.8" height="5.8" fill="none" stroke="#1a8ad4" stroke-width="1.2"/><rect x="5.5" y="0.6" width="1.4" height="1.6" fill="#1a8ad4"/><rect x="2.8" y="5.6" width="1.4" height="1.6" fill="#1a8ad4"/><rect x="8.6" y="5.6" width="1.4" height="1.6" fill="#1a8ad4"/></svg>
<div class="a" style="left:778px;top:835px;width:1px;height:21px;background:#a0a0a0"></div>
<div class="a" style="left:814px;top:835px;width:1px;height:21px;background:#a0a0a0"></div>
<div class="a" style="left:841px;top:835px;width:1px;height:21px;background:#a0a0a0"></div>
<div class="a" style="left:975px;top:835px;width:1px;height:21px;background:#a0a0a0"></div>
<div class="a" style="left:1103px;top:835px;width:1px;height:21px;background:#a0a0a0"></div>
<div class="a" style="left:1231px;top:835px;width:1px;height:21px;background:#a0a0a0"></div>
<div class="t" style="left:786px;top:839px;font-size:12.5px">CST</div>
<div class="t" style="left:822px;top:839px;font-size:12.5px">zh</div>
<div class="t" style="left:849px;top:839px;font-size:12.5px"><span class="u">可</span><span class="u">写</span></div>
<div class="t" style="left:983px;top:839px;font-size:12.5px"><span class="u">智</span><span class="u">能</span><span class="u">插</span><span class="u">入</span></div>
<div class="t" style="left:1111px;top:839px;font-size:12.5px">81 : 44 : 3042</div>
<div class="t" style="left:1239px;top:839px;font-size:12.5px">Sel: 0 | 0</div>
<div class="a" style="left:1315px;top:840px;width:2px;height:2px;background:#b4aa96"></div><div class="a" style="left:1315px;top:844px;width:2px;height:2px;background:#b4aa96"></div><div class="a" style="left:1315px;top:848px;width:2px;height:2px;background:#b4aa96"></div><div class="a" style="left:1315px;top:852px;width:2px;height:2px;background:#b4aa96"></div>
<div class="a" style="left:0px;top:860px;width:1600px;height:40px;background:#000"></div>
<svg style="left:16px;top:872px" width="17" height="17" viewBox="0 0 17 17"><path d="M0 2.3L6.8 1.4V8H0Z M7.6 1.3L16.5 0V8H7.6Z M0 8.8H6.8V15.5L0 14.6Z M7.6 8.8H16.5V17L7.6 15.7Z" fill="#fff"/></svg>
<svg style="left:63px;top:871px" width="17" height="18" viewBox="0 0 17 18"><circle cx="10.5" cy="6.5" r="5.5" fill="none" stroke="#fff" stroke-width="1.3"/><path d="M6.5 10.5L1 16.5" stroke="#fff" stroke-width="1.5"/></svg>
<svg style="left:111px;top:872px" width="17" height="17" viewBox="0 0 17 17"><path d="M0.5 0.5H11.5M0.5 16H11.5" stroke="#fff" stroke-width="1"/><rect x="2" y="3" width="8" height="10.5" fill="none" stroke="#fff" stroke-width="1.3"/><path d="M14.5 0.5V3M14.5 5V16.5" stroke="#fff" stroke-width="1.3"/></svg>
<svg style="left:158px;top:867px" width="26" height="26" viewBox="0 0 26 26"><defs><linearGradient id="ieg" x1="0" y1="0" x2="0" y2="1"><stop offset="0" stop-color="#7fd6ff"/><stop offset="1" stop-color="#1a8fe0"/></linearGradient></defs><path d="M21.5 15.5H8.2Q8.8 19.5 13 19.5Q16 19.5 17.5 17.2H21.8Q19.8 23 13 23Q4.2 23 4.2 14Q4.2 5 13 5Q22 5 21.5 15.5Z M8.3 12.2H17.3Q17 8.5 12.8 8.5Q8.9 8.5 8.3 12.2Z" fill="url(#ieg)" fill-rule="evenodd"/><path d="M5 20Q1.5 26 4 24Q12 19 19 11Q25 4 23.5 2.5Q22 1 16 4" fill="none" stroke="#e8b008" stroke-width="1.5"/></svg>
<svg style="left:209px;top:870px" width="22" height="18" viewBox="0 0 22 18"><path d="M0.5 1.5Q0.5 0.5 1.5 0.5H8L9.5 2H20.5Q21.5 2 21.5 3V17.5H0.5Z" fill="#f5d36a"/><rect x="0.5" y="3.5" width="21" height="14" fill="#ffe48c"/><rect x="1.5" y="1.2" width="5" height="1" fill="#fff"/><path d="M4.5 18V11.5Q4.5 10 6 10H16Q17.5 10 17.5 11.5V18H14V13.5H8V18Z" fill="#36a3e8"/></svg>
<svg style="left:256px;top:867px" width="24" height="24" viewBox="0 0 24 24"><circle cx="12" cy="12" r="10.8" fill="#fff" stroke="#3cb4b8" stroke-width="2.2"/><path d="M6 8Q9 4 14 5Q18 6 19 9L18.5 12Q17 14 16 13L16.5 17Q15 20 13 21L7.5 21Q9 17 9 14Q6.5 12 6 8Z" fill="#f2f2f2" stroke="#bdbdbd" stroke-width=".6"/><path d="M9.5 14Q12 16 16 13.5L16.5 17L14 21H7.5Q9.5 18 9.5 14Z" fill="#2a2420"/><path d="M16 7.5Q18.5 7 19.5 8.5Q19 10 17 9.5Z" fill="#222"/><circle cx="14" cy="8.6" r=".9" fill="#222"/><path d="M13.5 15L14.8 17M15.5 14.5L16 16.5" stroke="#fff" stroke-width=".7"/></svg>
<div class="a" style="left:293px;top:860px;width:49px;height:40px;background:#333"></div>
<div class="a" style="left:293px;top:897px;width:49px;height:3px;background:#76b9ed"></div>
<svg style="left:306px;top:867px" width="24" height="24" viewBox="0 0 24 24"><circle cx="12" cy="12" r="10.8" fill="#fff" stroke="#3cb4b8" stroke-width="2.2"/><path d="M6 8Q9 4 14 5Q18 6 19 9L18.5 12Q17 14 16 13L16.5 17Q15 20 13 21L7.5 21Q9 17 9 14Q6.5 12 6 8Z" fill="#f2f2f2" stroke="#bdbdbd" stroke-width=".6"/><path d="M9.5 14Q12 16 16 13.5L16.5 17L14 21H7.5Q9.5 18 9.5 14Z" fill="#2a2420"/><path d="M16 7.5Q18.5 7 19.5 8.5Q19 10 17 9.5Z" fill="#222"/><circle cx="14" cy="8.6" r=".9" fill="#222"/><path d="M13.5 15L14.8 17M15.5 14.5L16 16.5" stroke="#fff" stroke-width=".7"/></svg>
<svg style="left:1347px;top:874px" width="13" height="8" viewBox="0 0 13 8"><path d="M0.5 7L6.5 1L12.5 7" fill="none" stroke="#fff" stroke-width="1.2"/></svg>
<svg style="left:1372px;top:871px" width="14" height="17" viewBox="0 0 14 17"><rect x="1" y="0.5" width="5" height="3.5" fill="none" stroke="#fff" stroke-width="1"/><rect x="0.5" y="4" width="6" height="12" rx="1" fill="none" stroke="#fff" stroke-width="1"/><path d="M8 14L10 16L13.5 12.5" fill="none" stroke="#fff" stroke-width="1"/></svg>
<svg style="left:1394px;top:873px" width="16" height="15" viewBox="0 0 16 15"><rect x="3" y="0.5" width="12" height="9" fill="none" stroke="#fff" stroke-width="1"/><rect x="0.5" y="0.5" width="3" height="3" fill="#000" stroke="#fff" stroke-width="1"/><path d="M2 4V14.5M9 9.5V13.5M5 13.5H12" stroke="#fff" stroke-width="1"/></svg>
<svg style="left:1417px;top:873px" width="17" height="15" viewBox="0 0 17 15"><path d="M0.5 5H3.5L7.5 1V14L3.5 10H0.5Z" fill="none" stroke="#fff" stroke-width="1"/><path d="M10 5Q11.5 7.5 10 10M12 3Q14.5 7.5 12 12M14 1Q17.5 7.5 14 14" fill="none" stroke="#fff" stroke-width="1"/></svg>
<div class="t" style="left:1443px;top:873px;font-size:13px;color:#fff">ENG</div>
<div class="t" style="left:1495px;top:865px;font-size:12.5px;color:#fff">16:52</div>
<div class="t" style="left:1476px;top:884px;font-size:13px;color:#fff">2025/10/16</div>
<svg style="left:1559px;top:871px" width="17" height="16" viewBox="0 0 17 16"><path d="M0.5 0.5H16.5V11.5H10L8.5 14L7 11.5H0.5Z" fill="none" stroke="#fff" stroke-width="1"/></svg>
<div class="a" style="left:1595px;top:860px;width:1px;height:40px;background:#555"></div>
<div class="wm" style="left:55.5px;top:224px"><div style="position:relative;left:-2.8px">audit<span class="u">审</span><span class="u">计</span>03(Audit3)</div><div>audit-172.18.210.237</div></div>
<div class="wm" style="left:355.5px;top:224px"><div style="position:relative;left:-2.8px">audit<span class="u">审</span><span class="u">计</span>03(Audit3)</div><div>audit-172.18.210.237</div></div>
<div class="wm" style="left:655.5px;top:224px"><div style="position:relative;left:-2.8px">audit<span class="u">审</span><span class="u">计</span>03(Audit3)</div><div>audit-172.18.210.237</div></div>
<div class="wm" style="left:955.5px;top:224px"><div style="position:relative;left:-2.8px">audit<span class="u">审</span><span class="u">计</span>03(Audit3)</div><div>audit-172.18.210.237</div></div>
<div class="wm" style="left:1255.5px;top:224px"><div style="position:relative;left:-2.8px">audit<span class="u">审</span><span class="u">计</span>03(Audit3)</div><div>audit-172.18.210.237</div></div>
<div class="wm" style="left:1555.5px;top:224px"><div style="position:relative;left:-2.8px">audit<span class="u">审</span><span class="u">计</span>03(Audit3)</div><div>audit-172.18.210.237</div></div>
<div class="wm" style="left:55.5px;top:524px"><div style="position:relative;left:-2.8px">audit<span class="u">审</span><span class="u">计</span>03(Audit3)</div><div>audit-172.18.210.237</div></div>
<div class="wm" style="left:355.5px;top:524px"><div style="position:relative;left:-2.8px">audit<span class="u">审</span><span class="u">计</span>03(Audit3)</div><div>audit-172.18.210.237</div></div>
<div class="wm" style="left:655.5px;top:524px"><div style="position:relative;left:-2.8px">audit<span class="u">审</span><span class="u">计</span>03(Audit3)</div><div>audit-172.18.210.237</div></div>
<div class="wm" style="left:955.5px;top:524px"><div style="position:relative;left:-2.8px">audit<span class="u">审</span><span class="u">计</span>03(Audit3)</div><div>audit-172.18.210.237</div></div>
<div class="wm" style="left:1255.5px;top:524px"><div style="position:relative;left:-2.8px">audit<span class="u">审</span><span class="u">计</span>03(Audit3)</div><div>audit-172.18.210.237</div></div>
<div class="wm" style="left:1555.5px;top:524px"><div style="position:relative;left:-2.8px">audit<span class="u">审</span><span class="u">计</span>03(Audit3)</div><div>audit-172.18.210.237</div></div>
<div class="wm" style="left:55.5px;top:824px"><div style="position:relative;left:-2.8px">audit<span class="u">审</span><span class="u">计</span>03(Audit3)</div><div>audit-172.18.210.237</div></div>
<div class="wm" style="left:355.5px;top:824px"><div style="position:relative;left:-2.8px">audit<span class="u">审</span><span class="u">计</span>03(Audit3)</div><div>audit-172.18.210.237</div></div>
<div class="wm" style="left:655.5px;top:824px"><div style="position:relative;left:-2.8px">audit<span class="u">审</span><span class="u">计</span>03(Audit3)</div><div>audit-172.18.210.237</div></div>
<div class="wm" style="left:955.5px;top:824px"><div style="position:relative;left:-2.8px">audit<span class="u">审</span><span class="u">计</span>03(Audit3)</div><div>audit-172.18.210.237</div></div>
<div class="wm" style="left:1255.5px;top:824px"><div style="position:relative;left:-2.8px">audit<span class="u">审</span><span class="u">计</span>03(Audit3)</div><div>audit-172.18.210.237</div></div>
<div class="wm" style="left:1555.5px;top:824px"><div style="position:relative;left:-2.8px">audit<span class="u">审</span><span class="u">计</span>03(Audit3)</div><div>audit-172.18.210.237</div></div>
</body></html>
